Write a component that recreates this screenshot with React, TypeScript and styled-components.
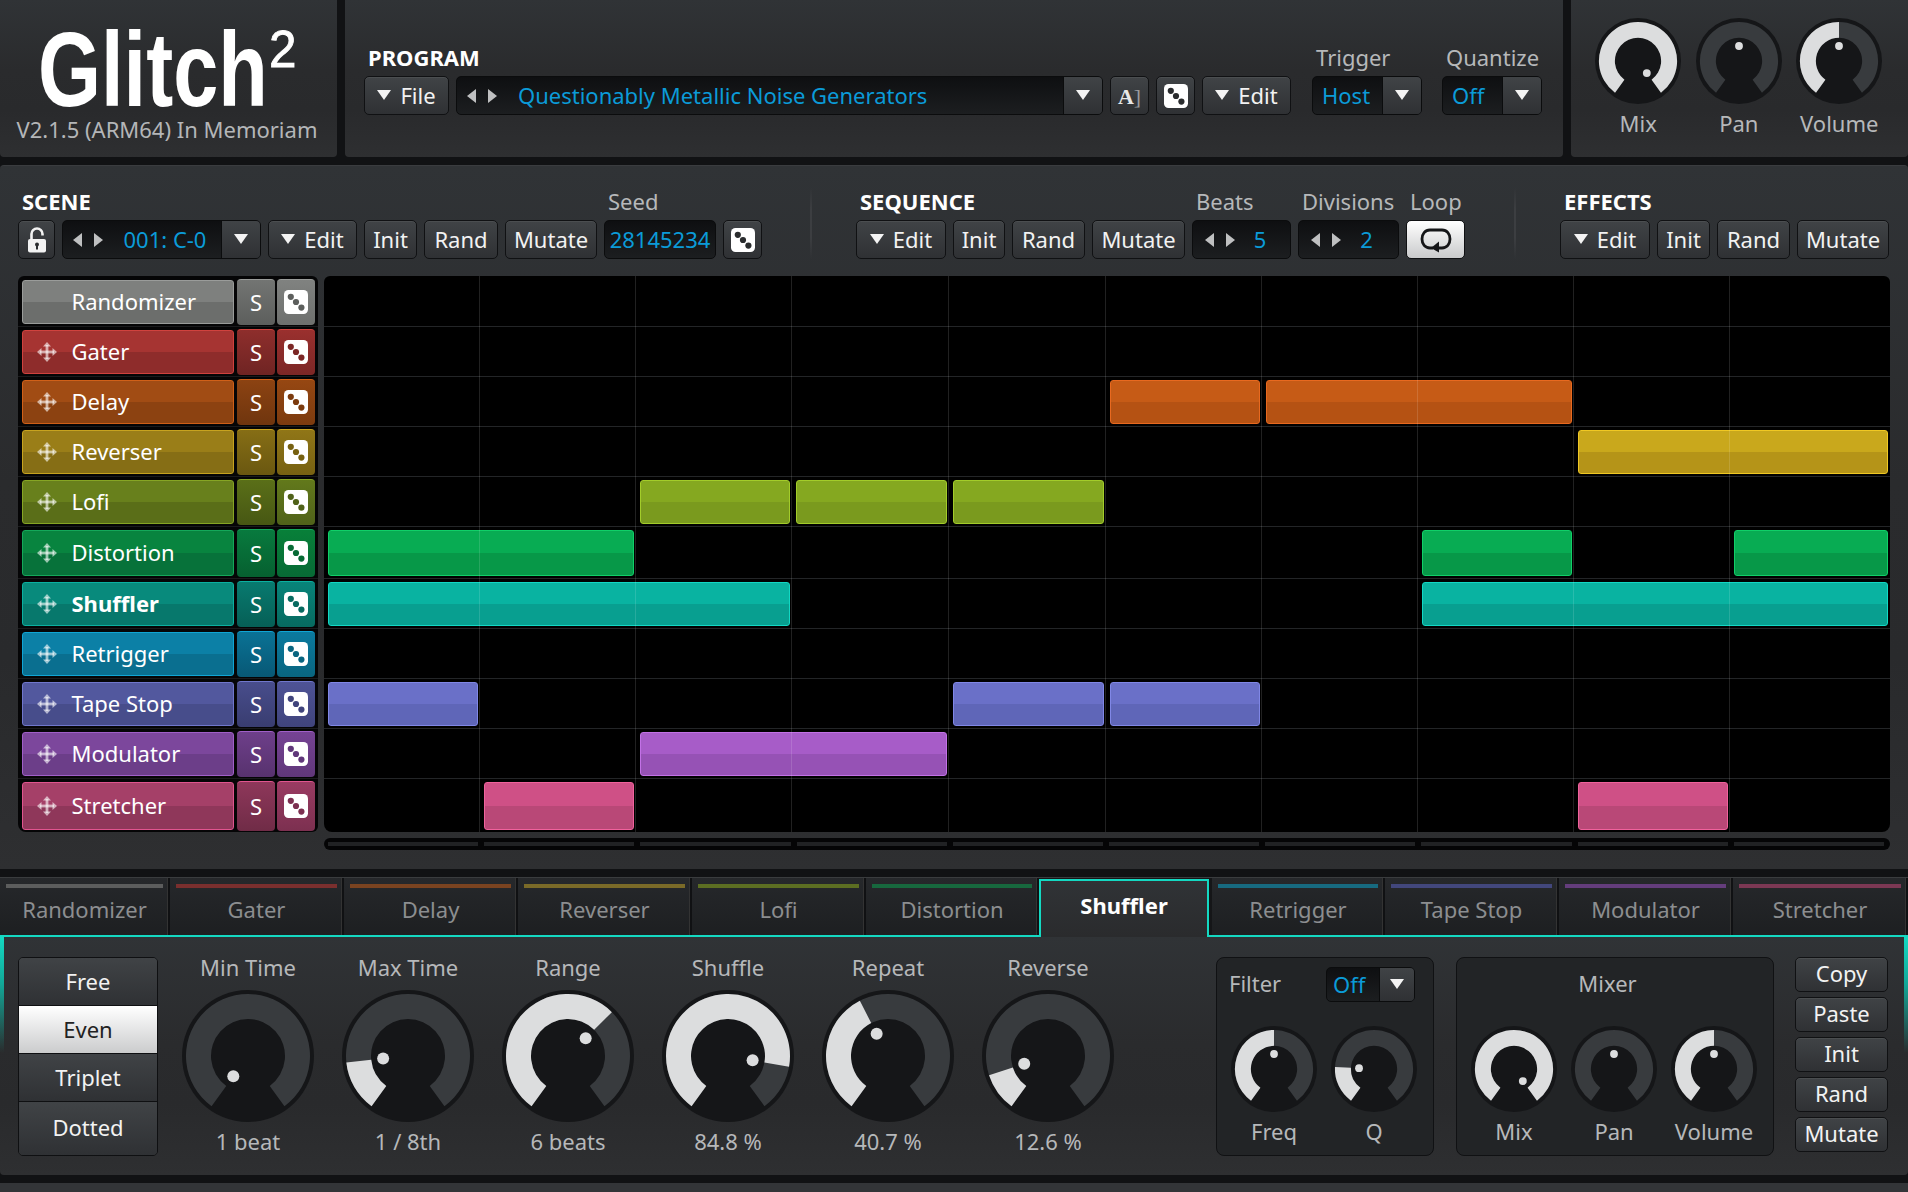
import React from "react";
import styled, { createGlobalStyle } from "styled-components";

const Global = createGlobalStyle`
  html, body { margin: 0; padding: 0; background: #111214; width: 1908px; height: 1192px; overflow: hidden; }
  * { box-sizing: border-box; }
  body { font-family: "Noto Sans", "Open Sans", sans-serif; font-size: 22px; color: #eee; }
`;

const BLUE = "#0b9bd8";
const TEAL = "#14d9c2";
const panelBg = "linear-gradient(180deg,#303336 0%,#2a2b2d 45%,#292a2c 70%,#2e2f31 100%)";
const btnBg = "linear-gradient(180deg,#404346 0%,#2f3134 100%)";
const gridCols = "156px 156px 156px 157px 157px 156px 156px 156px 156px 160px";

const Page = styled.div`
  width: 1908px; height: 1192px; display: flex; flex-direction: column; overflow: hidden;
`;
const TopBar = styled.div`display: flex; height: 157px; gap: 8px;`;
const TopPanel = styled.div<{ $w: number }>`
  width: ${p => p.$w}px; height: 157px; background: ${panelBg}; border-radius: 0 0 4px 4px;
`;
const LogoPanel = styled(TopPanel)`
  display: flex; flex-direction: column; align-items: center; padding-top: 16px;
`;
const LogoLine = styled.div`
  display: flex; align-items: flex-start; height: 99px; color: #fff; align-self: flex-start; margin-left: 38px;
`;
const LogoWord = styled.span`
  font-family: "Liberation Sans", sans-serif; font-weight: 700; font-size: 106px; line-height: 106px;
  display: inline-block; transform: scaleX(0.765); transform-origin: left center; width: 231px; white-space: nowrap;
`;
const LogoSup = styled.span`
  font-family: "Liberation Sans", sans-serif; font-size: 52px; line-height: 60px; margin-top: 3px;
  display: inline-block; transform: scaleX(0.95); transform-origin: left center; -webkit-text-stroke: 0.8px #fff;
`;
const Version = styled.div`font-size: 22px; line-height: 28px; height: 30px; color: #b4b6b8; margin-right: 3px;`;
const ProgramPanel = styled(TopPanel)`display: flex; padding: 43px 0 0 19px; gap: 7px;`;
const KnobPanel = styled(TopPanel)`display: flex; padding: 18px 0 0 17px;`;
const Col = styled.div<{ $ml?: number }>`
  display: flex; flex-direction: column; margin-left: ${p => p.$ml ?? 0}px;
`;
const Title = styled.div`
  font-weight: 700; font-size: 22px; line-height: 28px; height: 30px; padding-left: 4px; color: #fff;
`;
const Caption = styled.div`
  font-size: 22px; line-height: 28px; height: 30px; padding-left: 4px; color: #b6b8ba; white-space: nowrap;
`;
const Row = styled.div<{ $mt?: number }>`
  display: flex; gap: 7px; height: 39px; margin-top: ${p => p.$mt ?? 3}px;
`;
const Btn = styled.div<{ $w?: number; $icon?: boolean }>`
  width: ${p => (p.$w ? p.$w + "px" : "auto")}; height: 39px; display: flex; align-items: center; justify-content: center;
  gap: 9px; background: ${btnBg}; border: 1px solid #101113; border-radius: 5px; color: #f2f2f2;
  padding-bottom: ${p => (p.$icon ? 0 : 2)}px;
  box-shadow: inset 0 1px 0 rgba(255,255,255,.06); white-space: nowrap;
`;
const LoopBtn = styled(Btn)`
  background: linear-gradient(180deg,#ffffff 0%,#c9cacb 100%);
`;
const AGlyph = styled.span`
  font-family: "Liberation Serif", serif; font-weight: 700; font-size: 22px; color: #e8e8e8;
`;
const ABracket = styled.span`
  font-family: "Liberation Serif", serif; font-size: 22px; color: #9a9c9e;
`;
const Down = styled.i`
  display: block; width: 0; height: 0; border-left: 7px solid transparent; border-right: 7px solid transparent;
  border-top: 10px solid #f4f4f4;
`;
const Left = styled.i`
  display: block; width: 0; height: 0; border-top: 7px solid transparent; border-bottom: 7px solid transparent;
  border-right: 9px solid #bfc0c1;
`;
const Right = styled.i`
  display: block; width: 0; height: 0; border-top: 7px solid transparent; border-bottom: 7px solid transparent;
  border-left: 9px solid #bfc0c1;
`;
const Arrows = styled.div`display: flex; gap: 12px; flex: none;`;
const Box = styled.div<{ $w: number; $h?: number; $pl?: number }>`
  width: ${p => p.$w}px; height: ${p => p.$h ?? 39}px; display: flex; align-items: center; flex: none;
  padding-left: ${p => p.$pl ?? 10}px; border: 1px solid #0b0c0d; border-radius: 5px; overflow: hidden;
  background: linear-gradient(180deg,#0e0f11 0%,#1c1e20 100%); color: ${BLUE}; white-space: nowrap;
`;
const BoxText = styled.span<{ $ml?: number }>`margin-left: ${p => p.$ml ?? 0}px; flex: 1; padding-bottom: 2px;`;
const BoxCenter = styled.span<{ $dx?: number }>`
  flex: 1; text-align: center; padding-bottom: 2px;
  padding-left: ${p => Math.max(p.$dx ?? 0, 0)}px; padding-right: ${p => Math.max(-(p.$dx ?? 0), 0)}px;
`;
const Split = styled.div<{ $w: number }>`
  width: ${p => p.$w}px; height: 100%; flex: none; display: flex; align-items: center; justify-content: center;
  background: ${btnBg}; border-left: 1px solid #0b0c0d; padding-bottom: 2px;
`;

const Main = styled.div`
  height: 704px; margin-top: 8px; background: ${panelBg}; border-top: 1px solid #3a3c3f;
  border-radius: 4px 4px 0 0; padding: 21px 18px 0 18px; display: flex; flex-direction: column;
`;
const Header = styled.div`display: flex; height: 72px; align-items: flex-end;`;
const Divider = styled.div<{ $ml: number }>`
  width: 2px; height: 72px; margin-left: ${p => p.$ml}px;
  background: linear-gradient(180deg,rgba(70,72,75,0),#3c3e41 30%,#3c3e41 70%,rgba(70,72,75,0));
`;
const Body = styled.div`display: flex; margin-top: 17px; gap: 6px;`;
const TrackList = styled.div`
  width: 300px; height: 556px; background: #050506; border-radius: 6px 6px 6px 8px;
  display: flex; flex-direction: column; overflow: hidden;
`;
const TrackRow = styled.div<{ $h: number; $first: boolean }>`
  height: ${p => p.$h}px; display: flex; padding: 0 3px 0 4px; flex: none;
  border-top: 1px solid ${p => (p.$first ? "transparent" : "#1a1b1d")};
`;
const TrackLabel = styled.div<{ $top: string; $bot: string; $edge: string; $bold: boolean }>`
  width: 212px; margin: 3px 0 2px; display: flex; align-items: center; position: relative; padding: 0 0 2px 48.5px;
  border: 1px solid ${p => p.$edge}; border-radius: 3px; color: #fff; font-weight: ${p => (p.$bold ? 700 : 400)};
  background: linear-gradient(180deg,${p => p.$top} 0 50%,${p => p.$bot} 50% 100%);
`;
const MoveHolder = styled.span`
  position: absolute; left: 14px; top: 50%; margin-top: -14px; width: 20px; height: 20px; display: block;
`;
const TrackBtn = styled.div<{ $top: string; $bot: string; $edge: string; $ml: number }>`
  width: 38px; margin: 2px 0 1px ${p => p.$ml}px; display: flex; align-items: center; justify-content: center;
  border-top: 1px solid ${p => p.$edge}; border-radius: 4px; color: #fff; padding-bottom: 2px;
  background: linear-gradient(180deg,${p => p.$top} 0%,${p => p.$bot} 100%);
`;
const GridCol = styled.div`display: flex; flex-direction: column;`;
const Grid = styled.div`
  width: 1566px; height: 556px; background: #000; border-radius: 6px 6px 8px 8px; overflow: hidden; position: relative;
`;
const GridLines = styled.div`
  position: absolute; inset: 0; pointer-events: none; display: grid; grid-template-columns: ${gridCols};
`;
const GridLine = styled.div`
  border-right: 1px solid rgba(255,255,255,.13);
  &:last-child { border-right: none; }
`;
const GridRow = styled.div<{ $h: number; $first: boolean }>`
  height: ${p => p.$h}px; display: grid; grid-template-columns: ${gridCols}; grid-template-rows: 1fr;
  border-top: 1px solid ${p => (p.$first ? "transparent" : "#232527")};
`;
const Block = styled.div<{ $top: string; $bot: string; $edge: string }>`
  margin: 3px 2px 2px 4px; border: 1px solid ${p => p.$edge}; border-radius: 3px;
  background: linear-gradient(180deg,${p => p.$top} 0 50%,${p => p.$bot} 50% 100%);
`;
const Scroll = styled.div`
  margin-top: 6px; width: 1566px; height: 12px; background: #050506; border-radius: 6px; padding: 4px 4px;
  display: grid; grid-template-columns: repeat(9, 150.2px) 150px; column-gap: 6px;
`;
const ScrollSeg = styled.div`height: 4px; background: #212224;`;

const Tabs = styled.div`
  margin-top: 8px; height: 58px; display: grid; position: relative; z-index: 1;
  grid-template-columns: 170px 174px 174px 174px 174px 173px 170px 176px 174px 174px 175px;
  background: #151618; border-top: 1px solid #3a3c3e;
`;
const Tab = styled.div<{ $ml: number }>`
  height: 57px; margin-left: ${p => p.$ml}px; background: linear-gradient(180deg,#26282b,#1d1f21); border-right: 2px solid #101113;
  box-shadow: inset -1px 0 0 #333;
  text-align: center; color: #8c8e90;
`;
const Strip = styled.div<{ $c: string }>`height: 4px; margin: 6px 5px 0 6px; background: ${p => p.$c};`;
const TabText = styled.div`margin-top: 9px; line-height: 24px; padding-left: 1px;`;
const ActiveTab = styled.div`
  height: 58px; margin-top: 1px; border: 2px solid ${TEAL}; border-bottom: none;
  background: linear-gradient(180deg,#303336,#2a2b2d); text-align: center; color: #fff; font-weight: 700;
  padding-top: 12px; line-height: 24px;
`;
const Lower = styled.div`
  height: 240px; border-top: 2px solid ${TEAL}; background: ${panelBg}; border-radius: 0 0 4px 4px; position: relative;
  padding: 20px 0 0 18px; display: flex;
  &::before, &::after {
    content: ""; position: absolute; top: 0; width: 4px; height: 116px;
    background: linear-gradient(180deg,${TEAL},#12a898 40%,rgba(20,217,194,0));
  }
  &::before { left: 0; }
  &::after { right: 0; }
`;
const Seg = styled.div`
  width: 140px; height: 199px; flex: none; display: flex; flex-direction: column; border: 1px solid #0f1012; border-radius: 5px; overflow: hidden;
`;
const SegItem = styled.div<{ $h: number; $on: boolean }>`
  height: ${p => p.$h}px; flex: none; display: flex; align-items: center; justify-content: center; padding-bottom: 2px;
  border-bottom: 1px solid #0f1012; color: ${p => (p.$on ? "#222" : "#f2f2f2")};
  background: ${p => (p.$on ? "linear-gradient(180deg,#fff,#cbcccd)" : btnBg)};
  &:last-child { border-bottom: none; padding-bottom: 4px; }
`;
const KnobRow = styled.div`display: flex; margin-left: 10px;`;
const KnobCol = styled.div<{ $w: number }>`
  width: ${p => p.$w}px; flex: none; display: flex; flex-direction: column; align-items: center; color: #b6b8ba; white-space: nowrap;
`;
const KnobLabel = styled.div`line-height: 22px; height: 24px;`;
const KnobHead = styled(KnobLabel)`margin-top: -1px;`;
const KnobSvg = styled.svg<{ $s: number }>`width: ${p => p.$s}px; height: ${p => p.$s}px; display: block; flex: none;`;
const BigKnob = styled.div`margin: 10px 0 8px;`;
const SmallKnob = styled.div`margin-bottom: 8px;`;
const TopKnob = styled.div`margin-bottom: 8px;`;
const Group = styled.div<{ $w: number; $ml: number }>`
  width: ${p => p.$w}px; height: 199px; margin-left: ${p => p.$ml}px; flex: none; background: #222426; border: 1px solid #101113;
  border-radius: 8px; padding: 9px 0 0 7px; display: flex; flex-direction: column; color: #b6b8ba;
`;
const FilterHead = styled.div`display: flex; align-items: center; height: 35px; padding-left: 5px;`;
const FilterText = styled.span`width: 97px; padding-bottom: 3px;`;
const MixerHead = styled.div`height: 35px; line-height: 32px; text-align: center; padding-right: 22px;`;
const GroupKnobs = styled.div`display: flex; margin-top: 24px;`;
const SideCol = styled.div`
  width: 93px; flex: none; margin-left: 21px; display: flex; flex-direction: column; gap: 5px;
`;
const SideBtn = styled(Btn)`height: 35px; width: 93px; padding-bottom: 3px;`;
const Footer = styled.div`height: 9px; margin-top: 8px; background: #333538;`;

function polar(r: number, deg: number): [number, number] {
  const a = (deg * Math.PI) / 180;
  return [r * Math.sin(a), -r * Math.cos(a)];
}
function sector(ro: number, ri: number, a0: number, a1: number) {
  const [x0, y0] = polar(ro, a0);
  const [x1, y1] = polar(ro, a1);
  const [x2, y2] = polar(ri, a1);
  const [x3, y3] = polar(ri, a0);
  const large = a1 - a0 > 180 ? 1 : 0;
  return `M${x0} ${y0} A${ro} ${ro} 0 ${large} 1 ${x1} ${y1} L${x2} ${y2} A${ri} ${ri} 0 ${large} 0 ${x3} ${y3} Z`;
}

function Knob({ size, angle, fill = true }: { size: number; angle: number; fill?: boolean }) {
  const small = size < 100;
  const ro = small ? 60 : 62;
  const ri = small ? 35.5 : 37;
  const dr = small ? 23 : 25;
  const [dx, dy] = polar(dr, angle);
  return (
    <KnobSvg $s={size} viewBox="-66 -66 132 132">
      <circle r="66" fill="#151618" />
      <path d={sector(ro, ri, -144, 144)} fill="#383b3e" />
      {fill && angle > -144 && <path d={sector(ro, ri, -144, angle)} fill="#dcddde" />}
      <circle cx={dx} cy={dy} r="6" fill="#dcddde" />
    </KnobSvg>
  );
}

function Dice({ c = "#2a2c2e" }: { c?: string }) {
  return (
    <svg width="24" height="24" viewBox="0 0 24 24">
      <rect width="24" height="24" rx="4.5" fill="#fff" />
      <circle cx="6.8" cy="6.8" r="3.1" fill={c} />
      <circle cx="12" cy="12" r="3.1" fill={c} />
      <circle cx="17.4" cy="17.6" r="3.1" fill={c} />
    </svg>
  );
}
function MoveIcon() {
  return (
    <svg width="20" height="20" viewBox="0 0 20 20" fill="rgba(255,255,255,.6)">
      <rect x="8.6" y="3" width="2.8" height="14" />
      <rect x="3" y="8.6" width="14" height="2.8" />
      <polygon points="10,0 14,4.5 6,4.5" />
      <polygon points="10,20 14,15.5 6,15.5" />
      <polygon points="0,10 4.5,6 4.5,14" />
      <polygon points="20,10 15.5,6 15.5,14" />
    </svg>
  );
}
function Lock() {
  return (
    <svg width="20" height="26" viewBox="0 0 20 26">
      <path d="M4.5 13 V7 a5.5 5.5 0 0 1 11 0 v1.5" fill="none" stroke="#f2f2f2" strokeWidth="2.6" />
      <rect x="1" y="12" width="18" height="13.5" rx="2" fill="#f2f2f2" />
      <circle cx="10" cy="17.5" r="2" fill="#2a2c2e" />
      <rect x="9" y="18" width="2" height="4.5" fill="#2a2c2e" />
    </svg>
  );
}
function LoopIcon() {
  return (
    <svg width="32" height="26" viewBox="0 0 32 26">
      <path d="M13 21 H10 C5 21 2 17 2 12 C2 7 5 3 10 3 H22 C27 3 30 7 30 12 C30 17 27 21 22 21 H17" fill="none" stroke="#151618" strokeWidth="2.8" />
      <polygon points="19,14.5 19,25.5 11,21" fill="#151618" />
    </svg>
  );
}

const tracks = [
  { n: "Randomizer", top: "#7e807e", bot: "#6c6e6c", edge: "#9a9c9a", st: "#737573", sb: "#5c5e5c", dot: "#5d5f5d", bt: "#808280", bb: "#6e706e" , gt: "", gb: "", ge: "", h: 50, blocks: [] as number[][] , tab: "#5c5d5d" },
  { n: "Gater", top: "#a63432", bot: "#8e2c2b", edge: "#d0423e", st: "#8e2e2c", sb: "#6f2423", dot: "#7c2726", bt: "#9a302e", bb: "#7c2726", gt: "", gb: "", ge: "", h: 50, blocks: [], tab: "#7a2f2e" },
  { n: "Delay", top: "#a14c14", bot: "#8c4211", edge: "#d06018", st: "#8c4312", sb: "#6f350e", dot: "#7c3b0f", bt: "#964712", bb: "#7c3b0f", gt: "#c65b16", gb: "#b55213", ge: "#e8691f", h: 50, blocks: [[5, 1], [6, 2]], tab: "#7a4320" },
  { n: "Reverser", top: "#9a7e18", bot: "#866e15", edge: "#c7a31f", st: "#866e15", sb: "#6a5710", dot: "#776112", bt: "#907617", bb: "#776112", gt: "#c9a81c", gb: "#b59418", ge: "#f0c823", h: 50, blocks: [[8, 2]], tab: "#7a6a28" },
  { n: "Lofi", top: "#68801c", bot: "#5a6e18", edge: "#86a524", st: "#5a6f18", sb: "#475713", dot: "#50621a", bt: "#62791b", bb: "#50621a", gt: "#85a820", gb: "#7a9a1e", ge: "#a3cc2a", h: 50, blocks: [[2, 1], [3, 1], [4, 1]], tab: "#5c6e22" },
  { n: "Distortion", top: "#08843f", bot: "#07723a", edge: "#14a85a", st: "#087a3e", sb: "#066030", dot: "#076a35", bt: "#088039", bb: "#076a35", gt: "#08ac53", gb: "#079848", ge: "#10cf68", h: 52, blocks: [[0, 2], [7, 1], [9, 1]], tab: "#17683e" },
  { n: "Shuffler", top: "#088a7c", bot: "#07786c", edge: "#0bb0a0", st: "#087a6f", sb: "#065f56", dot: "#076a60", bt: "#08847a", bb: "#076a60", gt: "#09b3a1", gb: "#089f90", ge: "#12d8c4", h: 50, blocks: [[0, 3], [7, 3]], tab: "" },
  { n: "Retrigger", top: "#0c80a6", bot: "#0a6f90", edge: "#10a5d4", st: "#0a7295", sb: "#085875", dot: "#096580", bt: "#0b7a9e", bb: "#096580", gt: "", gb: "", ge: "", h: 50, blocks: [], tab: "#176a80" },
  { n: "Tape Stop", top: "#52589e", bot: "#474d8b", edge: "#7077cc", st: "#484d8c", sb: "#393d70", dot: "#40447c", bt: "#4e5396", bb: "#40447c", gt: "#6a70c8", gb: "#5f66b8", ge: "#8087e6", h: 50, blocks: [[0, 1], [4, 1], [5, 1]], tab: "#42477c" },
  { n: "Modulator", top: "#7c479c", bot: "#6c3e89", edge: "#a05fc8", st: "#6e3f8a", sb: "#57326e", dot: "#60377a", bt: "#764394", bb: "#60377a", gt: "#a75cc8", gb: "#9652b5", ge: "#c271e6", h: 50, blocks: [[2, 2]], tab: "#643d7c" },
  { n: "Stretcher", top: "#a54068", bot: "#8f375a", edge: "#e0558f", st: "#8e375a", sb: "#702c47", dot: "#7c3050", bt: "#9a3b62", bb: "#7c3050", gt: "#cf5086", gb: "#b94877", ge: "#f0629c", h: 54, blocks: [[1, 1], [8, 1]], tab: "#7c3854" },
];

export default function App() {
  return (
    <Page>
      <Global />
      <TopBar>
        <LogoPanel $w={337}>
          <LogoLine>
            <LogoWord>Glitch</LogoWord>
            <LogoSup>2</LogoSup>
          </LogoLine>
          <Version>V2.1.5 (ARM64) In Memoriam</Version>
        </LogoPanel>
        <ProgramPanel $w={1218}>
          <Col>
            <Title>PROGRAM</Title>
            <Row>
              <Btn $w={85}><Down />File</Btn>
              <Box $w={647}>
                <Arrows><Left /><Right /></Arrows>
                <BoxText $ml={21}>Questionably Metallic Noise Generators</BoxText>
                <Split $w={39}><Down /></Split>
              </Box>
              <Btn $w={39}><span><AGlyph>A</AGlyph><ABracket>]</ABracket></span></Btn>
              <Btn $w={39} $icon><Dice /></Btn>
              <Btn $w={89}><Down />Edit</Btn>
            </Row>
          </Col>
          <Col $ml={14}>
            <Caption>Trigger</Caption>
            <Row>
              <Box $w={110} $pl={9}>
                <BoxText>Host</BoxText>
                <Split $w={39}><Down /></Split>
              </Box>
            </Row>
          </Col>
          <Col $ml={13}>
            <Caption>Quantize</Caption>
            <Row>
              <Box $w={100} $pl={9}>
                <BoxText>Off</BoxText>
                <Split $w={39}><Down /></Split>
              </Box>
            </Row>
          </Col>
        </ProgramPanel>
        <KnobPanel $w={337}>
          <KnobCol $w={100.5}><TopKnob><Knob size={86} angle={144} /></TopKnob><KnobLabel>Mix</KnobLabel></KnobCol>
          <KnobCol $w={100.5}><TopKnob><Knob size={86} angle={0} fill={false} /></TopKnob><KnobLabel>Pan</KnobLabel></KnobCol>
          <KnobCol $w={100.5}><TopKnob><Knob size={86} angle={0} /></TopKnob><KnobLabel>Volume</KnobLabel></KnobCol>
        </KnobPanel>
      </TopBar>

      <Main>
        <Header>
          <Col>
            <Title>SCENE</Title>
            <Row>
              <Btn $w={37} $icon><Lock /></Btn>
              <Box $w={199}>
                <Arrows><Left /><Right /></Arrows>
                <BoxCenter $dx={6}>001: C-0</BoxCenter>
                <Split $w={39}><Down /></Split>
              </Box>
              <Btn $w={89}><Down />Edit</Btn>
              <Btn $w={53}>Init</Btn>
              <Btn $w={74}>Rand</Btn>
              <Btn $w={92}>Mutate</Btn>
            </Row>
          </Col>
          <Col $ml={7}>
            <Caption>Seed</Caption>
            <Row>
              <Box $w={112} $pl={0}><BoxCenter>28145234</BoxCenter></Box>
              <Btn $w={39} $icon><Dice /></Btn>
            </Row>
          </Col>
          <Divider $ml={48} />
          <Col $ml={44}>
            <Title>SEQUENCE</Title>
            <Row>
              <Btn $w={90}><Down />Edit</Btn>
              <Btn $w={52}>Init</Btn>
              <Btn $w={73}>Rand</Btn>
              <Btn $w={93}>Mutate</Btn>
            </Row>
          </Col>
          <Col $ml={7}>
            <Caption>Beats</Caption>
            <Row>
              <Box $w={99} $pl={12}><Arrows><Left /><Right /></Arrows><BoxCenter $dx={-5}>5</BoxCenter></Box>
            </Row>
          </Col>
          <Col $ml={7}>
            <Caption>Divisions</Caption>
            <Row>
              <Box $w={101} $pl={12}><Arrows><Left /><Right /></Arrows><BoxCenter $dx={-6}>2</BoxCenter></Box>
            </Row>
          </Col>
          <Col $ml={7}>
            <Caption>Loop</Caption>
            <Row>
              <LoopBtn $w={59} $icon><LoopIcon /></LoopBtn>
            </Row>
          </Col>
          <Divider $ml={49} />
          <Col $ml={44}>
            <Title>EFFECTS</Title>
            <Row>
              <Btn $w={90}><Down />Edit</Btn>
              <Btn $w={53}>Init</Btn>
              <Btn $w={73}>Rand</Btn>
              <Btn $w={92}>Mutate</Btn>
            </Row>
          </Col>
        </Header>

        <Body>
          <TrackList>
            {tracks.map((t, i) => (
              <TrackRow key={t.n} $h={t.h} $first={i === 0}>
                <TrackLabel $top={t.top} $bot={t.bot} $edge={t.edge} $bold={t.n === "Shuffler"}>
                  {i > 0 && <MoveHolder><MoveIcon /></MoveHolder>}
                  {t.n}
                </TrackLabel>
                <TrackBtn $top={t.st} $bot={t.sb} $edge={t.edge} $ml={3}>S</TrackBtn>
                <TrackBtn $top={t.bt} $bot={t.bb} $edge={t.edge} $ml={2}><Dice c={t.dot} /></TrackBtn>
              </TrackRow>
            ))}
          </TrackList>
          <GridCol>
            <Grid>
              {tracks.map((t, i) => (
                <GridRow key={t.n} $h={t.h} $first={i === 0}>
                  {t.blocks.map(([s, n]) => (
                    <Block
                      key={s}
                      $top={t.gt}
                      $bot={t.gb}
                      $edge={t.ge}
                      style={{ gridColumn: `${s + 1} / span ${n}` }}
                    />
                  ))}
                </GridRow>
              ))}
              <GridLines>
                {Array.from({ length: 10 }).map((_, i) => <GridLine key={i} />)}
              </GridLines>
            </Grid>
            <Scroll>
              {Array.from({ length: 10 }).map((_, i) => <ScrollSeg key={i} />)}
            </Scroll>
          </GridCol>
        </Body>
      </Main>

      <Tabs>
        {tracks.map(t =>
          t.n === "Shuffler" ? (
            <ActiveTab key={t.n}>{t.n}</ActiveTab>
          ) : (
            <Tab key={t.n} $ml={t.n === "Retrigger" ? 3 : 0}>
              <Strip $c={t.tab} />
              <TabText>{t.n}</TabText>
            </Tab>
          )
        )}
      </Tabs>
      <Lower>
        <Seg>
          <SegItem $h={48} $on={false}>Free</SegItem>
          <SegItem $h={48} $on={true}>Even</SegItem>
          <SegItem $h={48} $on={false}>Triplet</SegItem>
          <SegItem $h={53} $on={false}>Dotted</SegItem>
        </Seg>
        <KnobRow>
          <KnobCol $w={160}><KnobHead>Min Time</KnobHead><BigKnob><Knob size={132} angle={-144} /></BigKnob><KnobLabel>1 beat</KnobLabel></KnobCol>
          <KnobCol $w={160}><KnobHead>Max Time</KnobHead><BigKnob><Knob size={132} angle={-96} /></BigKnob><KnobLabel>1 / 8th</KnobLabel></KnobCol>
          <KnobCol $w={160}><KnobHead>Range</KnobHead><BigKnob><Knob size={132} angle={45} /></BigKnob><KnobLabel>6 beats</KnobLabel></KnobCol>
          <KnobCol $w={160}><KnobHead>Shuffle</KnobHead><BigKnob><Knob size={132} angle={100} /></BigKnob><KnobLabel>84.8 %</KnobLabel></KnobCol>
          <KnobCol $w={160}><KnobHead>Repeat</KnobHead><BigKnob><Knob size={132} angle={-27} /></BigKnob><KnobLabel>40.7 %</KnobLabel></KnobCol>
          <KnobCol $w={160}><KnobHead>Reverse</KnobHead><BigKnob><Knob size={132} angle={-108} /></BigKnob><KnobLabel>12.6 %</KnobLabel></KnobCol>
        </KnobRow>
        <Group $w={218} $ml={88}>
          <FilterHead>
            <FilterText>Filter</FilterText>
            <Box $w={89} $h={35} $pl={6}>
              <BoxText>Off</BoxText>
              <Split $w={35}><Down /></Split>
            </Box>
          </FilterHead>
          <GroupKnobs>
            <KnobCol $w={100}><SmallKnob><Knob size={86} angle={0} /></SmallKnob><KnobLabel>Freq</KnobLabel></KnobCol>
            <KnobCol $w={100}><SmallKnob><Knob size={86} angle={-87} /></SmallKnob><KnobLabel>Q</KnobLabel></KnobCol>
          </GroupKnobs>
        </Group>
        <Group $w={318} $ml={22}>
          <MixerHead>Mixer</MixerHead>
          <GroupKnobs>
            <KnobCol $w={100}><SmallKnob><Knob size={86} angle={144} /></SmallKnob><KnobLabel>Mix</KnobLabel></KnobCol>
            <KnobCol $w={100}><SmallKnob><Knob size={86} angle={0} fill={false} /></SmallKnob><KnobLabel>Pan</KnobLabel></KnobCol>
            <KnobCol $w={100}><SmallKnob><Knob size={86} angle={0} /></SmallKnob><KnobLabel>Volume</KnobLabel></KnobCol>
          </GroupKnobs>
        </Group>
        <SideCol>
          <SideBtn>Copy</SideBtn>
          <SideBtn>Paste</SideBtn>
          <SideBtn>Init</SideBtn>
          <SideBtn>Rand</SideBtn>
          <SideBtn>Mutate</SideBtn>
        </SideCol>
      </Lower>
      <Footer />
    </Page>
  );
}
